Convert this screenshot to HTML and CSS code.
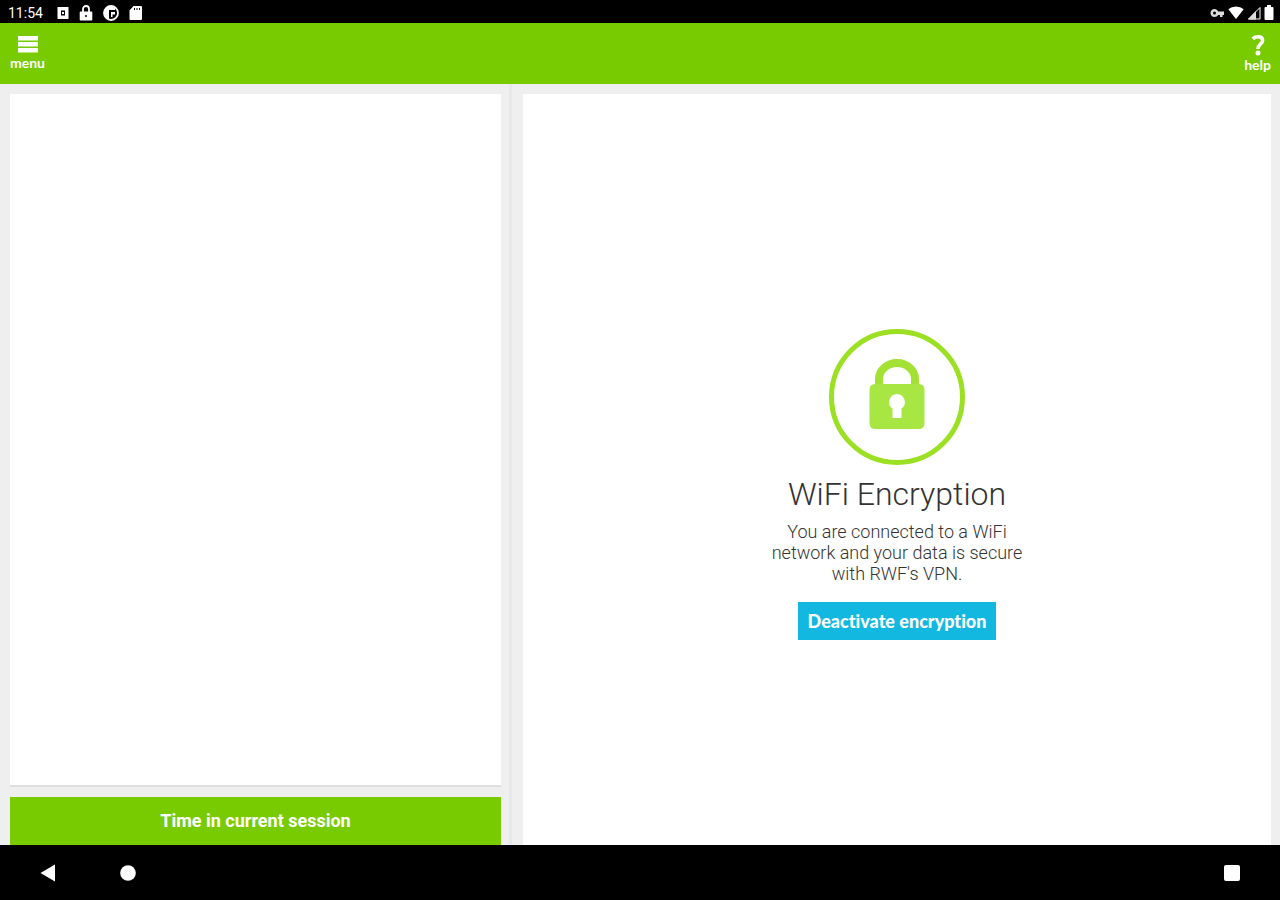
FILE: index.html
```html
<!DOCTYPE html>
<html lang="en">
<head>
<meta charset="utf-8">
<meta name="viewport" content="width=device-width, initial-scale=1">
<title>WiFi Encryption</title>
<link rel="stylesheet" href="styles.css">
</head>
<body>
<div class="status">
  <div class="status-left">
    <span class="clock">11:54</span>
    <svg width="12" height="14" viewBox="0 0 12 14"><path fill="#fff" fill-rule="evenodd" d="M.5 1h11v12H.5zM4 4.500v5h4v-5z"/><path fill="#fff" d="M5 6h2v2H5z"/></svg>
    <svg width="14" height="16" viewBox="0 0 14 16"><path fill="none" stroke="#fff" stroke-width="1.800" d="M4 7V4a3 3 0 0 1 6 0v3"/><path fill="#fff" fill-rule="evenodd" d="M1.500 6.500h11q.8 0 .8 1v7q0 1-1 1H1.700q-1 0-1-1v-7q0-1 .8-1zM7 10a1 1 0 1 0 0 2 1 1 0 0 0 0-2z"/></svg>
    <svg width="16" height="16" viewBox="0 0 16 16"><circle cx="8" cy="8" r="7" fill="none" stroke="#fff" stroke-width="1.800"/><path fill="#fff" d="M8 1a7 7 0 0 0-5 12l3 1.500V5h6V3zM8 7h4v2.500H9.500V12H8z"/></svg>
    <svg width="13" height="14" viewBox="0 0 13 14"><path fill="#fff" fill-rule="evenodd" d="M4.500 0H12q1 0 1 1v12q0 1-1 1H1.500q-1 0-1-1V4.500zM5 2v2h1V2zM7.500 2v2h1V2zM10 2v2h1V2z"/></svg>
  </div>
  <div class="status-right">
    <svg width="15" height="10" viewBox="0 0 15 10"><path fill="#ddd" fill-rule="evenodd" d="M4.500 1C2 1 .5 2.800.5 5S2 9 4.500 9c1.700 0 3-.8 3.600-2H10v2h2.500V7H14V3.500H8.100C7.500 2 6.200 1 4.500 1zM4.500 3.500a1.500 1.500 0 1 1 0 3 1.500 1.500 0 0 1 0-3z"/></svg>
    <svg width="16" height="13" viewBox="0 0 16 13"><path fill="#fff" d="M8 13 .3 3.300Q3.500.5 8 .5t7.700 2.800z"/></svg>
    <svg width="14" height="14" viewBox="0 0 14 14"><path fill="none" stroke="#fff" d="M1.500 13 13 1.500V13z"/><path fill="#ddd" d="M1 13.500 9 5v8.500z"/></svg>
    <svg width="10" height="15" viewBox="0 0 10 15"><path fill="#fff" d="M3 0h4v2h1.500q1 0 1 1v11q0 1-1 1h-7q-1 0-1-1V3q0-1 1-1H3z"/></svg>
  </div>
</div>
<header class="appbar">
  <button class="bar-btn" type="button">
    <svg width="20" height="18" viewBox="0 0 20 18"><path fill="#fff" d="M0 1h20v4.500H0zM0 7h20v4.500H0zM0 13h20v4.500H0z"/></svg>
    <span>menu</span>
  </button>
  <button class="bar-btn help" type="button">
    <svg width="14" height="22" viewBox="0 0 14 22"><path fill="none" stroke="#fff" stroke-width="3.600" d="M1.800 3.800Q4 1.800 7 1.800c3 0 4.600 1.400 4.600 3.600C11.600 8.800 7 9 7 14"/><circle cx="7" cy="18" r="2.500" fill="#fff"/></svg>
    <span>help</span>
  </button>
</header>
<main class="panes">
  <section class="left">
    <div class="blank"></div>
    <button class="session" type="button">Time in current session</button>
  </section>
  <section class="right">
    <div class="card">
      <svg class="lock" width="136" height="136" viewBox="0 0 136 136"><circle cx="68" cy="68" r="65.500" fill="none" stroke="#9be022" stroke-width="5"/><path fill="none" stroke="#a3e234" stroke-width="8" d="M50 58V50a18 16 0 0 1 36 0v8"/><path fill="#a8e644" fill-rule="evenodd" d="M46 55h44q5.500 0 5.500 6v33q0 6-6 6h-43q-6 0-6-6V61q0-6 5.500-6zM68 65a8 8 0 0 0-4.500 14.500V89h9v-9.500A8 8 0 0 0 68 65z"/></svg>
      <h1>WiFi Encryption</h1>
      <p>You are connected to a WiFi network and your data is secure with RWF's VPN.</p>
      <button class="deactivate" type="button">Deactivate encryption</button>
    </div>
  </section>
</main>
<nav class="navbar">
  <button type="button" aria-label="Back"><svg width="16" height="18" viewBox="0 0 16 18"><path fill="#fff" d="M.5 9 15 .5v17z"/></svg></button>
  <button type="button" aria-label="Home"><svg width="16" height="16" viewBox="0 0 16 16"><circle cx="8" cy="8" r="7.800" fill="#fff"/></svg></button>
  <button class="recent" type="button" aria-label="Recent apps"><svg width="16" height="16" viewBox="0 0 16 16"><rect width="16" height="16" rx="2" fill="#fff"/></svg></button>
</nav>
</body>
</html>
```
FILE: styles.css
```css
* { box-sizing: border-box; }
body {
  margin: 0;
  min-height: 100vh;
  display: flex;
  flex-direction: column;
  background: #efeff0;
  font-family: Roboto, "Noto Sans", sans-serif;
}
button { border: 0; margin: 0; padding: 0; background: none; color: #fff; cursor: pointer; }
svg { display: block; }
.status {
  height: 23px;
  padding: 2px 6px 0 8px;
  display: flex;
  justify-content: space-between;
  align-items: center;
  background: #000;
  color: #fff;
}
.status-left { display: flex; align-items: center; gap: 10px; }
.status-right { display: flex; align-items: center; gap: 3px; }
.clock { font-size: 14px; line-height: 16px; margin-right: 4px; }
.appbar {
  height: 61px;
  padding: 12px 9px 0 10px;
  display: flex;
  justify-content: space-between;
  align-items: flex-start;
  background: #77cb00;
}
.bar-btn {
  display: flex;
  flex-direction: column;
  align-items: center;
  gap: 2px;
  font: bold 14px/16px Lato, sans-serif;
}
.help { gap: 0; }
.panes { flex: 1; display: grid; grid-template-columns: 2fr 3fr; }
.left {
  display: flex;
  flex-direction: column;
  gap: 10px;
  padding: 10px 8px 0 10px;
  border-right: 3px solid #e8e8e8;
}
.blank { flex: 1; background: #fff; border-bottom: 2px solid #dededf; }
.session {
  height: 48px;
  background: #77cb00;
  font: bold 18px/24px Roboto, sans-serif;
}
.right { padding: 10px 9px 0 11px; }
.card {
  height: 100%;
  display: flex;
  flex-direction: column;
  align-items: center;
  justify-content: center;
  padding-top: 30px;
  background: #fff;
  text-align: center;
}
h1 { margin: 10px 0 0; font-weight: 300; font-size: 32px; line-height: 38px; color: #333; }
p { margin: 8px 0 0; max-width: 270px; font-weight: 300; font-size: 18px; line-height: 21px; color: #333; }
.deactivate {
  margin-top: 18px;
  padding: 7px 10px;
  background: #12b8e0;
  font: 900 18px/24px Lato, sans-serif;
  font-variant-ligatures: none;
}
.navbar { height: 55px; padding: 0 40px; display: flex; align-items: center; gap: 64px; background: #000; }
.recent { margin-left: auto; }
```
